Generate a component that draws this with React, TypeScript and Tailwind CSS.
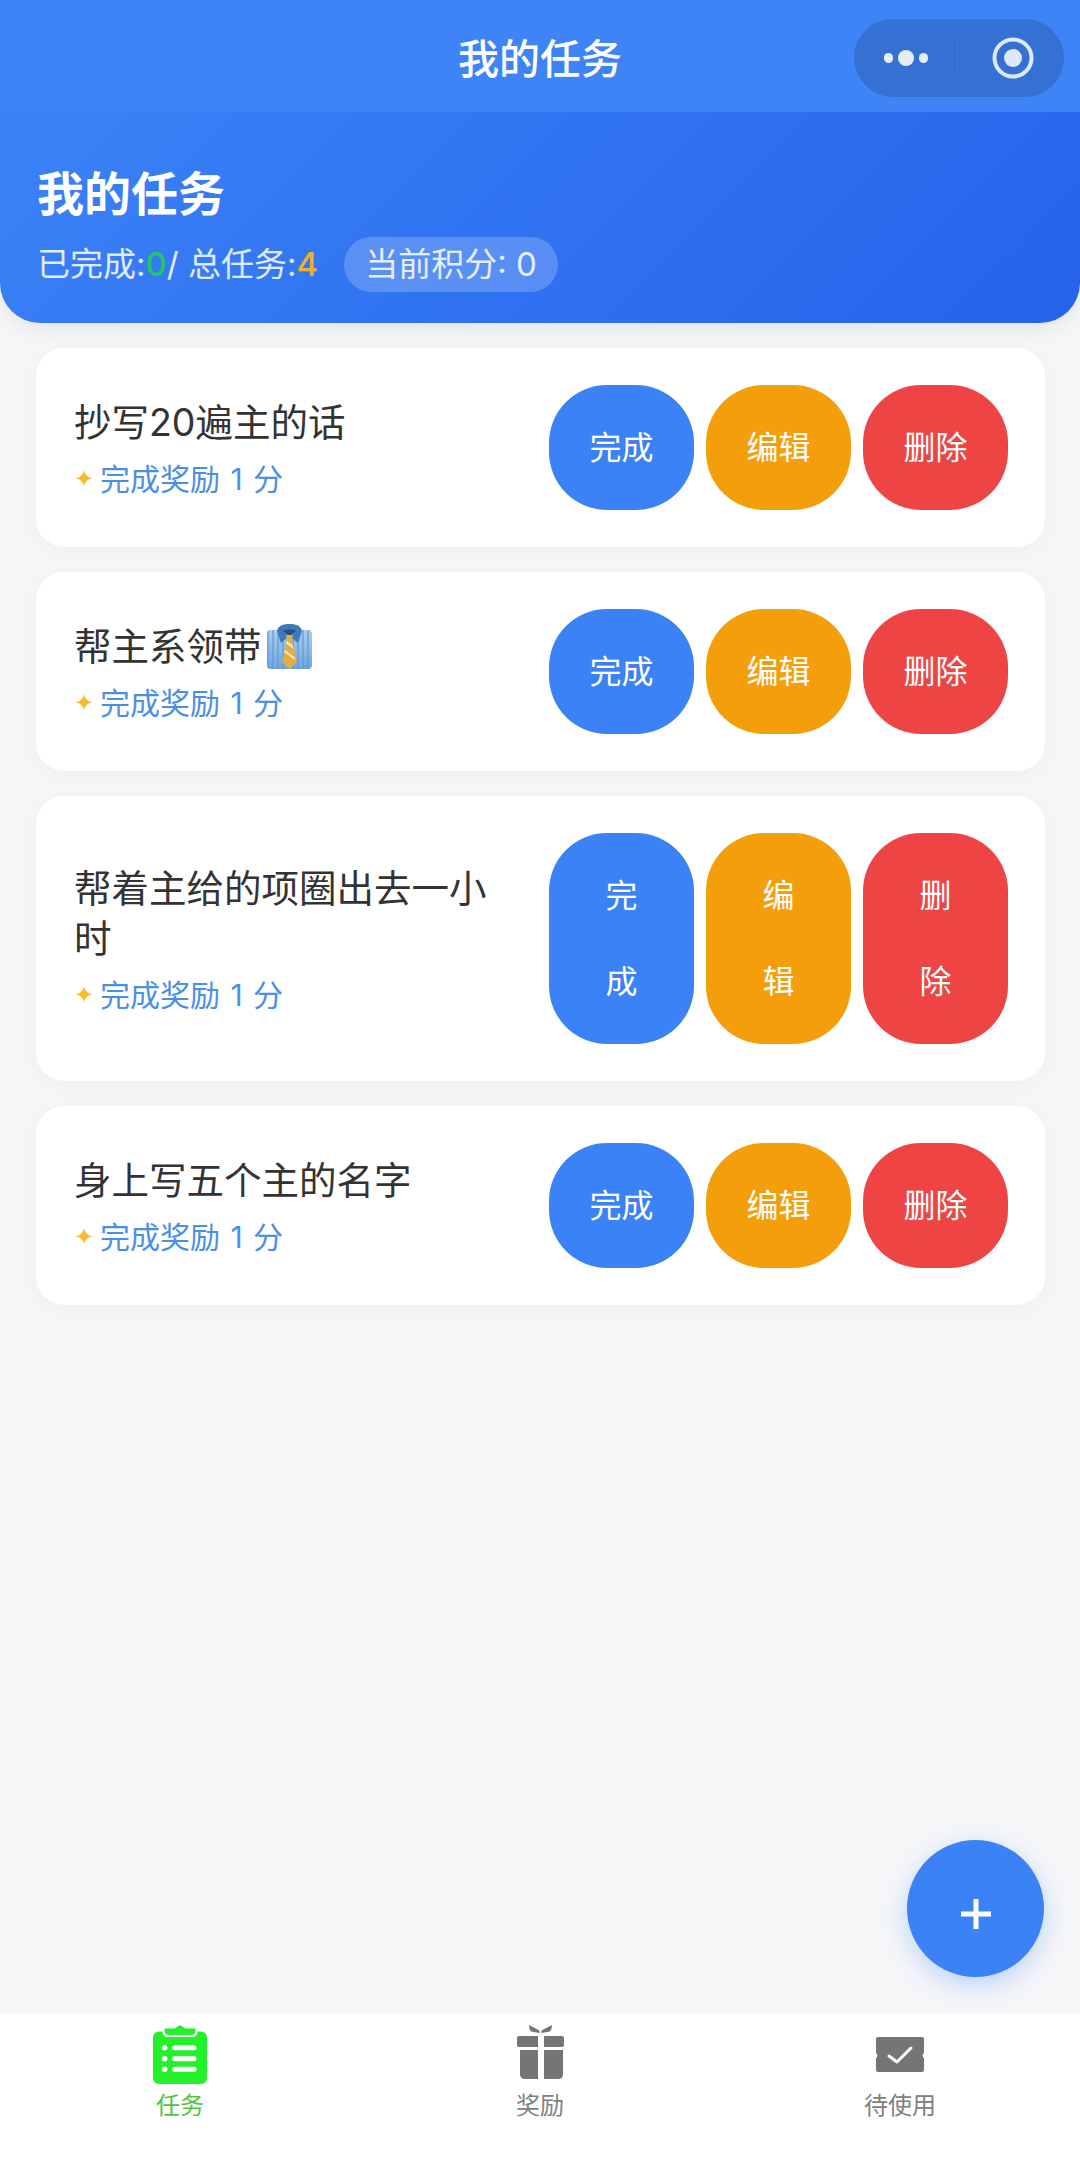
import React from "react";

const FONT = "[font-family:'Inter','Noto_Sans_CJK_SC','Liberation_Sans',sans-serif]";

function TieEmoji() {
  return (
    <svg width="45" height="45" viewBox="0 0 45 45" className="ml-[5px] shrink-0">
      <defs>
        <linearGradient id="shirt" x1="0" y1="0" x2="0" y2="1">
          <stop offset="0" stopColor="#a9cdf0" />
          <stop offset="1" stopColor="#6fa6e0" />
        </linearGradient>
        <pattern id="stripes" width="5" height="5" patternUnits="userSpaceOnUse">
          <rect width="2" height="5" fill="#5d95d3" opacity="0.55" />
        </pattern>
      </defs>
      <rect x="0" y="6" width="45" height="39" rx="4" fill="url(#shirt)" />
      <rect x="0" y="6" width="45" height="39" rx="4" fill="url(#stripes)" />
      <path d="M10 7 C11 1 17 0 22.5 0 C28 0 34 1 35 7 L31 19 L22.5 12 L14 19 Z" fill="#3f7ab8" />
      <path d="M16 7 C18 5 27 5 29 7 L22.5 12 Z" fill="#24527f" />
      <path d="M19 11 L26 11 L25 16 L30 38 L22.5 45 L15 38 L20 16 Z" fill="#e3ad42" />
      <path d="M20 17 L25.5 21 L26.5 25 L19 19.5 Z M18 26 L27.5 33 L28 36 L17 28 Z" fill="#f7e6b8" />
    </svg>
  );
}

function ClipboardIcon() {
  return (
    <svg width="54" height="59" viewBox="0 0 54 59">
      <rect x="0" y="6.5" width="54" height="52.5" rx="6" fill="#22f12c" />
      <path d="M9.500 6 H44.500 V7 C44.500 10 42 12 39 12 H15 C12 12 9.500 10 9.500 7 Z" fill="#fff" />
      <path d="M11.500 3.500 H21.500 L27 0 L32.500 3.500 H42.500 V6 C42.500 8.500 40.500 10 38 10 H16 C13.500 10 11.500 8.500 11.500 6 Z" fill="#22f12c" />
      {[22.7, 33.7, 44.3].map((y) => (
        <g key={y} fill="#fff">
          <circle cx="11.7" cy={y} r="2.7" />
          <rect x="19" y={y - 2.5} width="24.5" height="5" rx="2.500" />
        </g>
      ))}
    </svg>
  );
}

function GiftIcon() {
  return (
    <svg width="47" height="54" viewBox="0 0 47 54" fill="#757575">
      <path d="M12 0 L22.500 5.500 V8 L14 6.500 Q12 4 12 0 Z M35 0 L24.500 5.500 V8 L33 6.500 Q35 4 35 0 Z" />
      <path d="M2 11 H21 V22 H2 Q0 22 0 20 V13 Q0 11 2 11 Z" />
      <path d="M27 11 H45 Q47 11 47 13 V20 Q47 22 45 22 H27 Z" />
      <path d="M3 25 H21 V54 H8 Q3 54 3 49 Z" />
      <path d="M27 25 H46 V49 Q46 54 41 54 H27 Z" />
    </svg>
  );
}

function TicketIcon() {
  return (
    <svg width="48" height="35" viewBox="0 0 48 35">
      <path
        d="M2 0 H46 Q48 0 48 2 V16 A3 3 0 0 0 48 21 V33 Q48 35 46 35 H2 Q0 35 0 33 V21 A3 3 0 0 0 0 16 V2 Q0 0 2 0 Z"
        fill="#757575"
      />
      <path d="M13 19 L21 25 L35 11" fill="none" stroke="#fff" strokeWidth="3" strokeLinecap="round" strokeLinejoin="round" />
    </svg>
  );
}

function ActionButton({ lines, className }: { lines: string[]; className: string }) {
  return (
    <button className={`w-[145px] pt-[20px] pb-[19px] rounded-[58px] text-white text-[32px] leading-[86px] text-center ${className}`}>
      {lines.map((line) => (
        <div key={line}>{line}</div>
      ))}
    </button>
  );
}

type Task = { title: React.ReactNode; split?: boolean };

function TaskCard({ title, split }: Task) {
  const done = split ? ["完", "成"] : ["完成"];
  const edit = split ? ["编", "辑"] : ["编辑"];
  const del = split ? ["删", "除"] : ["删除"];
  return (
    <div className="flex items-center pl-[38px] pr-[37px] py-[37px] bg-white rounded-[28px] shadow-[0_4px_20px_rgba(0,0,0,0.03)]">
      <div className="flex-1 min-w-0 pr-[40px] pt-[3px]">
        <div className="flex items-center flex-wrap text-[37.5px] leading-[50px] text-[#333333]">{title}</div>
        <div className="mt-[9px] flex items-center text-[30px] leading-[44px] text-[#4a8fe7]">
          <span className="w-[26px] text-[24px] text-[#f8bb2c] [font-family:'DejaVu_Sans',sans-serif]">✦</span>
          <span className="[word-spacing:2px]">完成奖励 1 分</span>
        </div>
      </div>
      <div className="flex gap-[12px] shrink-0">
        <ActionButton lines={done} className="bg-[#3b82f6]" />
        <ActionButton lines={edit} className="bg-[#f59e0b]" />
        <ActionButton lines={del} className="bg-[#ef4444]" />
      </div>
    </div>
  );
}

function TabItem({ icon, label, active, top }: { icon: React.ReactNode; label: string; active?: boolean; top?: boolean }) {
  return (
    <div className="flex flex-col items-center">
      <div className={`h-[59px] flex justify-center ${top ? "items-start" : "items-center"}`}>{icon}</div>
      <div className={`mt-[4px] text-[24px] leading-[36px] ${active ? "text-[#4fc43f]" : "text-[#808080]"}`}>{label}</div>
    </div>
  );
}

export default function App() {
  return (
    <div className={`relative w-[1080px] h-[2163px] flex flex-col overflow-hidden bg-[#f5f6f8] ${FONT}`}>
      <div className="h-[112px] shrink-0 grid grid-cols-[1fr_auto_1fr] items-center bg-[#3e84f6] relative z-10">
        <div />
        <div className="pt-[6px] text-[41px] leading-[56px] font-medium text-white">我的任务</div>
        <div className="justify-self-end mr-[16px] mt-[4px] w-[210px] h-[78px] rounded-[39px] bg-[#3570d3] flex items-center">
          <div className="w-[104px] h-[40px] flex items-center justify-center gap-[5px] border-r border-[#3f78d8]">
            <span className="w-[9px] h-[10px] rounded-full bg-[#e6edf9]" />
            <span className="w-[16px] h-[16px] rounded-full bg-[#e6edf9]" />
            <span className="w-[9px] h-[10px] rounded-full bg-[#e6edf9]" />
          </div>
          <div className="flex-1 flex items-center justify-center pl-[4px]">
            <svg width="42" height="42" viewBox="0 0 42 42">
              <circle cx="21" cy="21" r="18.500" fill="none" stroke="#dfe8f7" strokeWidth="4" />
              <circle cx="21" cy="21" r="9" fill="#dfe8f7" />
            </svg>
          </div>
        </div>
      </div>

      <div className="h-[211px] shrink-0 px-[37px] pt-[50px] rounded-b-[40px] bg-[linear-gradient(135deg,#3b82f6,#2563eb)] shadow-[0_6px_20px_rgba(0,0,0,0.07)]">
        <div className="text-[47px] leading-[64px] font-bold text-white">我的任务</div>
        <div className="mt-[11px] flex items-center text-[33px] text-white/85">
          <span>已完成:</span>
          <span className="text-[#22c55e] font-medium">0</span>
          <span>/ 总任务:</span>
          <span className="text-[#ecb02e] font-medium">4</span>
          <span className="ml-[26px] h-[55px] px-[21px] flex items-center rounded-[28px] bg-white/20">当前积分: 0</span>
        </div>
      </div>

      <div className="flex-1 mt-[25px] pl-[36px] pr-[35px] flex flex-col gap-[25px]">
        <TaskCard title="抄写20遍主的话" />
        <TaskCard
          title={
            <>
              帮主系领带
              <TieEmoji />
            </>
          }
        />
        <TaskCard title="帮着主给的项圈出去一小时" split />
        <TaskCard title="身上写五个主的名字" />
      </div>

      <button className="absolute left-[907px] top-[1840px] w-[137px] h-[137px] rounded-full bg-[#3b82f6] flex items-center justify-center shadow-[0_8px_24px_rgba(59,130,246,0.3)]">
        <svg width="30" height="30" viewBox="0 0 30 30" fill="#fff" className="mt-[10px]">
          <rect x="0" y="12.500" width="30" height="5" />
          <rect x="12.500" y="0" width="5" height="30" />
        </svg>
      </button>

      <div className="h-[150px] shrink-0 bg-white grid grid-cols-3 pt-[12px]">
        <TabItem icon={<ClipboardIcon />} label="任务" active />
        <TabItem icon={<GiftIcon />} label="奖励" top />
        <TabItem icon={<TicketIcon />} label="待使用" />
      </div>
    </div>
  );
}
